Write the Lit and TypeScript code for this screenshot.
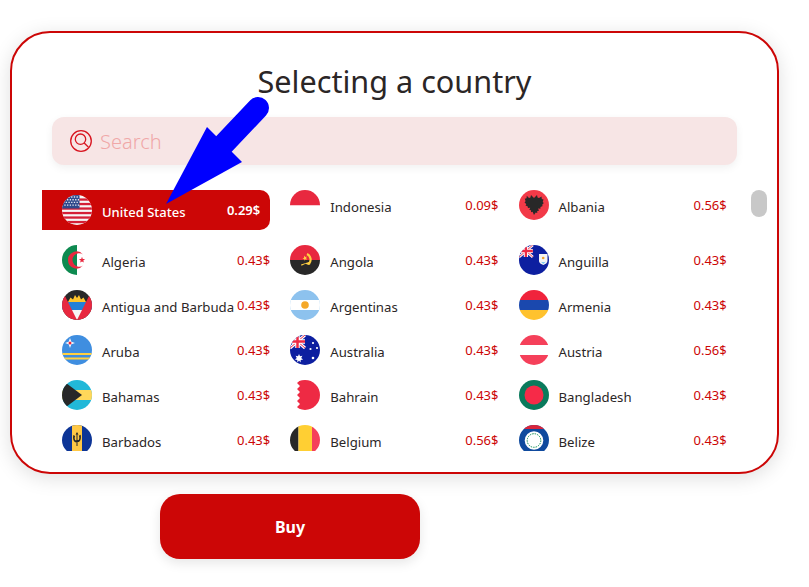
import { LitElement, html, css, svg } from "lit";
import { customElement } from "lit/decorators.js";

const C = { red: "#ee2a44", black: "#282828", blue: "#0d1fa0" };

const unionJack = svg`<g><rect x="0" y="0" width="15" height="13" fill="#1a2aa5"/><path d="M0 0L15 13M15 0L0 13" stroke="#fff" stroke-width="3"/><path d="M0 0L15 13M15 0L0 13" stroke="#ee2a44" stroke-width="1"/><path d="M7.500 0V13M0 6.500H15" stroke="#fff" stroke-width="4.500"/><path d="M7.500 0V13M0 6.500H15" stroke="#ee2a44" stroke-width="2.500"/></g>`;

const flags: Record<string, unknown> = {
  us: svg`<rect width="30" height="30" fill="#f6f6f6"/>${[3.4, 7.9, 12.4, 16.9, 21.4, 25.9].map((y) => svg`<rect y="${y}" width="30" height="2.300" fill="#d51f36"/>`)}<rect width="17.500" height="13.500" fill="#2f4a8c"/><path d="M1 2h16M2.300 4.700h15M1 7.400h16M2.300 10.100h15" stroke="#e4e6f0" stroke-width="1.350" stroke-dasharray="1.350 1.350"/>`,
  id: svg`<rect width="30" height="15.500" fill="#e8283f"/><rect y="15.500" width="30" height="14.500" fill="#fff"/>`,
  al: svg`<rect width="30" height="30" fill="#f23a48"/><path d="M12 5l1.500 1.500L15 8l1.500-1.500L18 5l.6 2.600 1.400.4 2.500-1.500.3 2.500 1.700.5-.8 2.500 1.100.9-1.800 2 .8 1.200-2.300 1-.1 1.600-2.300-.2.900 2.200-1.800.2.100 2-1.600-.4L15 25l-1.400-3.200-1.600.4.100-2-1.800-.2.900-2.200-2.300.2-.1-1.600-2.300-1 .8-1.200-1.800-2 1.100-.9-.8-2.500 1.700-.5.300-2.500L10 8l1.400-.4z" fill="${C.black}"/>`,
  dz: svg`<rect width="15" height="30" fill="#0d8a50"/><rect x="15" width="15" height="30" fill="#fff"/><path fill-rule="evenodd" d="M6 15a8.500 8.500 0 0 1 15-5.500a6.700 6.700 0 1 0 0 11A8.500 8.500 0 0 1 6 15z" fill="#e8283f"/><path d="M20 11.800l.8 2.100 2.300.1-1.800 1.400.6 2.200-1.900-1.200-1.900 1.200.6-2.200-1.800-1.400 2.300-.1z" fill="#e8283f"/>`,
  ao: svg`<rect width="30" height="15" fill="#e8283f"/><rect y="15" width="30" height="15" fill="${C.black}"/><path d="M17 9a6.200 6.200 0 0 1 1.800 10" fill="none" stroke="#ffd040" stroke-width="2.200"/><path d="M11 19.500l8-2.500 1.500 2-2 1-3-1.200-4 2z" fill="#ffd040"/><path d="M14 10.500l1.200 1.600 1.500-.6-.6 1.700 1.200 1.200-1.800-.1-.8 1.500-.5-1.700-1.700-.4 1.500-1z" fill="#ffd040"/>`,
  ai: svg`<rect width="30" height="30" fill="${C.blue}"/><g transform="scale(.92)">${unionJack}</g><path d="M20 9h8.500v7c0 2-2 3-4.200 4C22 19 20 18 20 16z" fill="#f4f4f4"/><path d="M21.500 16.500c1 .8 4.500.8 5.500 0l-2.700 2.500z" fill="#7fc8f0"/><circle cx="24.200" cy="13" r="1.300" fill="#f0a030"/>`,
  ag: svg`<rect width="30" height="30" fill="${C.black}"/><path d="M6 12L8.500 7.500l2.500 2L13 5l2 3 2-3 2 4.500 2.500-2L24 12z" fill="#ffc52e"/><rect y="12" width="30" height="8" fill="#2580d8"/><path d="M6 20h18L15 30z" fill="#f6f6f6"/><path d="M0 0L15 30L30 0V30H0z" fill="#e8283f"/>`,
  ar: svg`<rect width="30" height="30" fill="#8dc2ee"/><rect y="10" width="30" height="10" fill="#fff"/><circle cx="15" cy="15" r="3.800" fill="#f5a828"/>`,
  am: svg`<rect width="30" height="10" fill="#f0233c"/><rect y="10" width="30" height="10" fill="#1a48ae"/><rect y="20" width="30" height="10" fill="#ffc22e"/>`,
  aw: svg`<rect width="30" height="30" fill="#3f8ee0"/><rect y="18" width="30" height="2" fill="#ffd040"/><rect y="22.500" width="30" height="2" fill="#ffd040"/><path d="M8 3l1.300 3.700L13 8 9.300 9.300 8 13 6.700 9.300 3 8l3.700-1.300z" fill="#fff"/><circle cx="8" cy="8" r="1.500" fill="#e8283f"/>`,
  au: svg`<rect width="30" height="30" fill="#0d1fa0"/>${unionJack}<path d="M9 19l1 2.300 2.400-.5-1.200 2.200 1.900 1.600-2.400.4-.1 2.400-1.600-1.800-1.600 1.800-.1-2.400-2.400-.4 1.900-1.600-1.200-2.200 2.400.5z" fill="#fff"/><circle cx="23" cy="8" r="1.100" fill="#fff"/><circle cx="27" cy="13" r="1.100" fill="#fff"/><circle cx="20.500" cy="14" r="1.100" fill="#fff"/><circle cx="23" cy="23" r="1.300" fill="#fff"/>`,
  at: svg`<rect width="30" height="10" fill="#f5405a"/><rect y="10" width="30" height="10" fill="#fff"/><rect y="20" width="30" height="10" fill="#f5405a"/>`,
  bs: svg`<rect width="30" height="30" fill="#22b8d8"/><rect y="10" width="30" height="10" fill="#ffd75a"/><path d="M0 0L20 15L0 30z" fill="${C.black}"/>`,
  bh: svg`<rect width="30" height="30" fill="#fff"/><path d="M30 0V30H10L7 27 10 24 7 21 10 18 7 15 10 12 7 9 10 6 7 3 10 0z" fill="#ee2a44"/>`,
  bd: svg`<rect width="30" height="30" fill="#0a7a5c"/><circle cx="15" cy="15" r="9.500" fill="#f62a48"/>`,
  bb: svg`<rect width="30" height="30" fill="#0d3596"/><rect x="10" width="10" height="30" fill="#ffc845"/><path d="M15 7l1.500 2.500h-1v5.500h1.200c.8-1 .8-2.800.1-4.200l1.900-1c.6 2.800.2 6-1.800 7.200h-1.400V21h-1v-3.800h-1.400c-2-1.200-2.400-4.400-1.800-7.200l1.900 1c-.7 1.400-.7 3.200.1 4.200h1.200V9.500h-1z" fill="${C.black}"/>`,
  be: svg`<rect width="8.500" height="30" fill="${C.black}"/><rect x="8.500" width="13.500" height="30" fill="#ffcf33"/><rect x="22" width="8" height="30" fill="#f5405a"/>`,
  bz: svg`<rect width="30" height="30" fill="#0f4a9e"/><rect width="30" height="4" fill="#d8263c"/><circle cx="15" cy="15.500" r="9.300" fill="#fff"/><circle cx="15" cy="15.500" r="6.800" fill="none" stroke="#0d8a50" stroke-width="1" stroke-dasharray="1.500 1"/>`,
};

const rows: [string, string, string, boolean?][] = [
  ["us", "United States", "0.29$", true], ["id", "Indonesia", "0.09$"], ["al", "Albania", "0.56$"],
  ["dz", "Algeria", "0.43$"], ["ao", "Angola", "0.43$"], ["ai", "Anguilla", "0.43$"],
  ["ag", "Antigua and Barbuda", "0.43$"], ["ar", "Argentinas", "0.43$"], ["am", "Armenia", "0.43$"],
  ["aw", "Aruba", "0.43$"], ["au", "Australia", "0.43$"], ["at", "Austria", "0.56$"],
  ["bs", "Bahamas", "0.43$"], ["bh", "Bahrain", "0.43$"], ["bd", "Bangladesh", "0.43$"],
  ["bb", "Barbados", "0.43$"], ["be", "Belgium", "0.56$"], ["bz", "Belize", "0.43$"],
];

@customElement("app-root")
export class AppRoot extends LitElement {
  static styles = css`
    :host { display: block; position: relative; height: 587px; padding: 31px 0 0 10px; box-sizing: border-box; background: #fff;
      font-family: "Noto Sans", sans-serif; color: #2b2626; overflow: hidden; }
    .card { box-sizing: border-box; width: 769px; height: 443px; border: 2px solid #cc0606; border-radius: 40px; background: #fff;
      box-shadow: 0 4px 20px rgba(0,0,0,.13); padding: 26px 10px 0 30px; display: flex; flex-direction: column; }
    h1 { margin: 0 20px 0 0; font-size: 30.6px; line-height: 45px; font-weight: 400; text-align: center; }
    .search { box-sizing: border-box; width: 685px; height: 48px; margin: 13px 0 25px 10px; padding-left: 18px; display: flex; align-items: center; gap: 8px;
      background: #f7e5e5; border-radius: 12px; box-shadow: 0 3px 8px rgba(0,0,0,.06); }
    .search svg { display: block; flex: none; }
    .ph { font-size: 20px; font-weight: 300; color: #f0a8a8; line-height: 27px; }
    .body { display: flex; align-items: flex-start; gap: 24px; height: 261px; overflow: hidden; }
    .grid { width: 685px; flex: none; display: grid; grid-template-columns: repeat(3, 228.25px); row-gap: 15px; align-items: start; }
    .item { display: flex; align-items: center; box-sizing: border-box; height: 30px; padding-left: 20px; font-size: 13px; }
    .flag { width: 30px; height: 30px; border-radius: 50%; display: block; flex: none; margin-right: 10px; }
    .name { padding-top: 4px; line-height: 18px; flex: 1; white-space: nowrap; font-size: 13.2px; }
    .price { color: #cc0606; line-height: 18px; }
    .sel { height: 40px; background: #cc0606; color: #fff; border-radius: 0 10px 10px 0; padding-right: 10px; }
    .sel .name { font-weight: 500; font-size: 13px; }
    .sel .price { color: #fff; font-weight: 600; }
    .thumb { width: 16px; height: 27px; border-radius: 8px; background: #c8c8c8; flex: none; }
    .buy { display: block; box-sizing: border-box; width: 260px; height: 65px; margin: 20px 0 0 150px; border: 0; border-radius: 20px; background: #cc0606; color: #fff;
      font: 700 16px "Noto Sans", sans-serif; box-shadow: 0 4px 12px rgba(0,0,0,.1); }
    .arrow { position: absolute; left: 0; top: 0; pointer-events: none; }
  `;

  render() {
    return html`
      <div class="card">
        <h1>Selecting a country</h1>
        <div class="search">
          <svg width="22" height="22" viewBox="0 0 22 22" fill="none" stroke="#d8141f" stroke-width="1.300">
            <circle cx="11" cy="11" r="10.300" />
            <circle cx="10.500" cy="9.200" r="5.200" />
            <path d="M14.200 13L18.300 17" />
          </svg>
          <span class="ph">Search</span>
        </div>
        <div class="body">
          <div class="grid">
            ${rows.map(([f, n, p, sel]) => html`
              <div class="item ${sel ? "sel" : ""}">
                <svg class="flag" viewBox="0 0 30 30">${flags[f]}</svg>
                <span class="name">${n}</span>
                <span class="price">${p}</span>
              </div>`)}
          </div>
          <div class="thumb"></div>
        </div>
      </div>
      <button class="buy">Buy</button>
      <svg class="arrow" width="809" height="587" viewBox="0 0 809 587">
        <path d="M258 108L222 146" stroke="#0000ff" stroke-width="22" stroke-linecap="round" fill="none" />
        <path d="M166 204L207 127L242 162z" fill="#0000ff" />
      </svg>
    `;
  }
}
